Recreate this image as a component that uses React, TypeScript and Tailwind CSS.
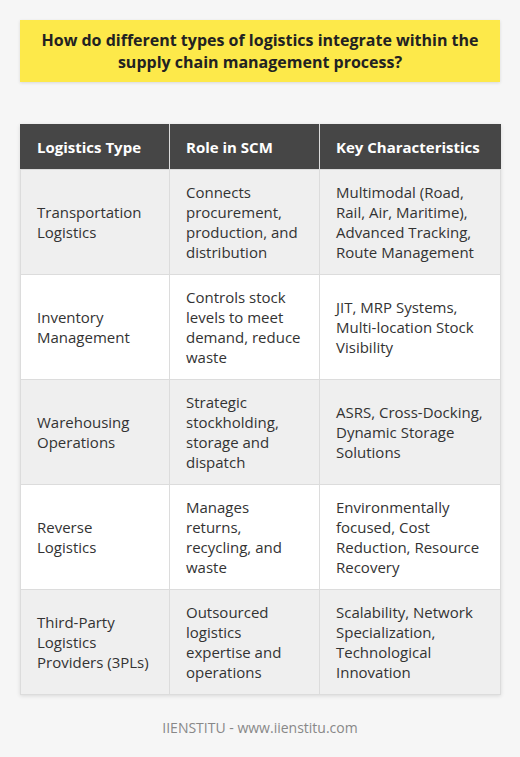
const rows = [
  {
    type: "Transportation Logistics",
    role: "Connects procurement, production, and distribution",
    traits: "Multimodal (Road, Rail, Air, Maritime), Advanced Tracking, Route Management",
  },
  {
    type: "Inventory Management",
    role: "Controls stock levels to meet demand, reduce waste",
    traits: "JIT, MRP Systems, Multi-location Stock Visibility",
  },
  {
    type: "Warehousing Operations",
    role: "Strategic stockholding, storage and dispatch",
    traits: "ASRS, Cross-Docking, Dynamic Storage Solutions",
  },
  {
    type: "Reverse Logistics",
    role: "Manages returns, recycling, and waste",
    traits: "Environmentally focused, Cost Reduction, Resource Recovery",
  },
  {
    type: "Third-Party Logistics Providers (3PLs)",
    role: "Outsourced logistics expertise and operations",
    traits: "Scalability, Network Specialization, Technological Innovation",
  },
];

export default function App() {
  return (
    <div className="min-h-screen w-full bg-[#f6f6f6] px-5 pt-5 font-['Open_Sans',sans-serif]">
      <div className="bg-[#fde94a] px-4 py-[9px] text-center shadow-[0_1px_3px_rgba(0,0,0,0.12)]">
        <h1 className="text-[16px] font-bold leading-[22px] text-[#222]">
          How do different types of logistics integrate within the supply chain management process?
        </h1>
      </div>

      <table className="mt-[42px] w-[480px] table-fixed border-collapse shadow-[0_1px_4px_rgba(0,0,0,0.12)]">
        <colgroup>
          <col className="w-[149px]" />
          <col className="w-[150px]" />
          <col className="w-[181px]" />
        </colgroup>
        <thead>
          <tr className="bg-[#464646] text-white">
            <th className="border border-[#dcdcdc] border-t-[#464646] border-l-[#464646] px-4 py-3 text-left text-[15px] font-bold leading-5">
              Logistics Type
            </th>
            <th className="border border-[#dcdcdc] border-t-[#464646] px-4 py-3 text-left text-[15px] font-bold leading-5">
              Role in SCM
            </th>
            <th className="border border-[#dcdcdc] border-t-[#464646] border-r-[#464646] px-4 py-3 text-left text-[15px] font-bold leading-5">
              Key Characteristics
            </th>
          </tr>
        </thead>
        <tbody>
          {rows.map((r, i) => (
            <tr key={r.type} className={i % 2 === 0 ? "bg-[#efefef]" : "bg-white"}>
              <td className="border border-[#dcdcdc] px-4 py-3 align-middle text-[15px] leading-5 text-[#333]">
                {r.type}
              </td>
              <td className="border border-[#dcdcdc] px-4 py-3 align-middle text-[15px] leading-5 text-[#333]">
                {r.role}
              </td>
              <td className="border border-[#dcdcdc] px-4 py-3 align-middle text-[15px] leading-5 text-[#333]">
                {r.traits}
              </td>
            </tr>
          ))}
        </tbody>
      </table>

      <p className="mt-[23px] text-center text-[14px] leading-5 text-[#888]">
        IIENSTITU - www.iienstitu.com
      </p>
    </div>
  );
}
